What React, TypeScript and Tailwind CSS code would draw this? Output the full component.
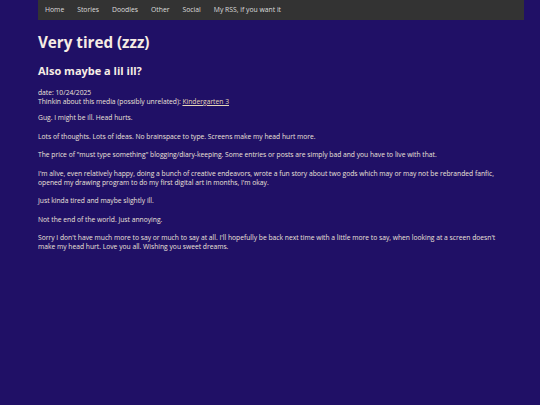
export default function App() {
  const nav = ["Home", "Stories", "Doodles", "Other", "Social", "My RSS, if you want it"];
  const paras = [
    "Gug. I might be ill. Head hurts.",
    "Lots of thoughts. Lots of ideas. No brainspace to type. Screens make my head hurt more.",
    "The price of \"must type something\" blogging/diary-keeping. Some entries or posts are simply bad and you have to live with that.",
    "I'm alive, even relatively happy, doing a bunch of creative endeavors, wrote a fun story about two gods which may or may not be rebranded fanfic, opened my drawing program to do my first digital art in months, I'm okay.",
    "Just kinda tired and maybe slightly ill.",
    "Not the end of the world. Just annoying.",
    "Sorry I don't have much more to say or much to say at all. I'll hopefully be back next time with a little more to say, when looking at a screen doesn't make my head hurt. Love you all. Wishing you sweet dreams.",
  ];
  return (
    <div className="min-h-[405px] bg-[#201066] text-[#ece2da] font-['Open_Sans',sans-serif]">
      <div className="ml-[38px] w-[486px]">
        <nav className="flex h-[20px] items-center bg-[#333333] px-[7px] text-[6.8px] text-[#dddddd]">
          {nav.map((n) => (
            <span key={n} className="mr-[13px]">{n}</span>
          ))}
        </nav>
        <h1 className="mt-[11px] text-[15.2px] font-bold leading-[22px] text-[#f6ece4]">Very tired (zzz)</h1>
        <h2 className="mt-[10px] text-[11px] font-bold leading-[16px] text-[#f6ece4]">Also maybe a lil ill?</h2>
        <div className="mt-[9px] w-[468px] text-[6.72px] leading-[9px]">
          <div>date: 10/24/2025</div>
          <div>
            Thinkin about this media (possibly unrelated):{" "}
            <span className="underline text-[#e6d6b8]">Kindergarten 3</span>
          </div>
          {paras.map((p, i) => (
            <p key={i} className={i === 0 ? "mt-[7px]" : "mt-[9.5px]"}>{p}</p>
          ))}
        </div>
      </div>
    </div>
  );
}
